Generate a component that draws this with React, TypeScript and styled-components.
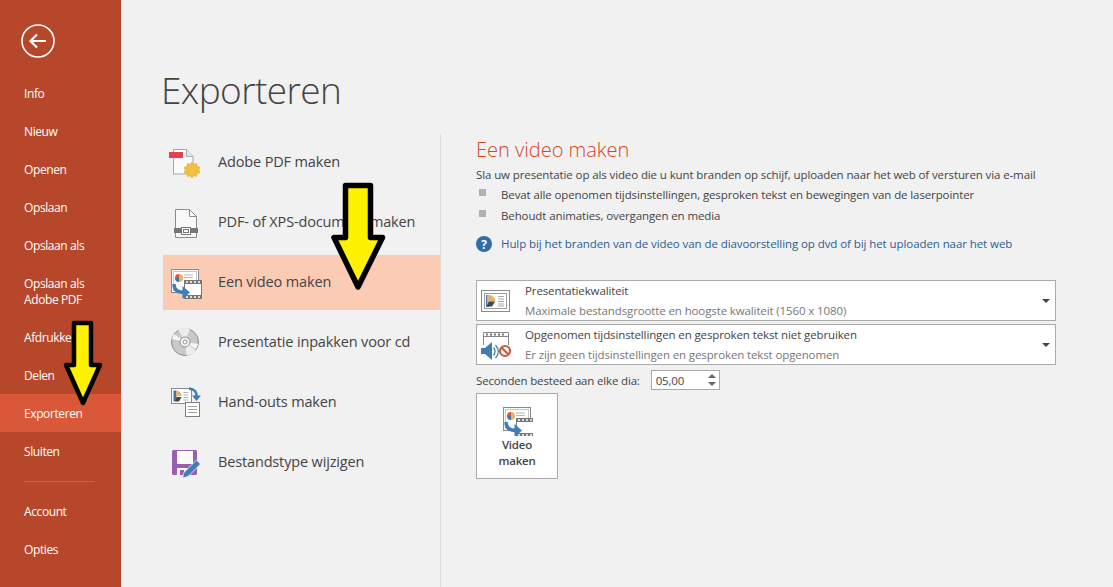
import React from "react";
import styled, { createGlobalStyle } from "styled-components";

const GlobalStyle = createGlobalStyle`
    html, body {
        margin: 0;
        padding: 0;
        height: 100%;
        overflow: hidden;
    }
    body {
        font-family: "Open Sans", "Noto Sans", "Liberation Sans", sans-serif;
        background: #f1f1f1;
    }
`;

const Page = styled.div`
    position: relative;
    display: flex;
    width: 1113px;
    height: 587px;
    overflow: hidden;
    background: #f1f1f1;
`;

/* sidebar */
const Sidebar = styled.nav`
    flex: 0 0 121px;
    display: flex;
    flex-direction: column;
    padding-top: 24px;
    background: #b7472a;
    box-sizing: border-box;
`;
const BackButton = styled.div`
    display: flex;
    margin: 0 0 16px 21px;
    height: 34px;
`;
const NavItem = styled.div<{ $active?: boolean; $tall?: boolean }>`
    display: flex;
    align-items: center;
    box-sizing: border-box;
    height: ${({ $tall }) => ($tall ? "54px" : "38px")};
    padding: 2px 0 0 24px;
    font-size: 12px;
    line-height: 16px;
    letter-spacing: -0.4px;
    color: #fff;
    background: ${({ $active }) => ($active ? "#d9583a" : "transparent")};
`;
const NavSeparator = styled.div`
    width: 71px;
    height: 1px;
    margin: 11px 0 10px 24px;
    background: #cf6147;
`;

/* main */
const Main = styled.main`
    flex: 1;
    display: flex;
    flex-direction: column;
    min-width: 0;
`;
const Title = styled.h1`
    margin: 0;
    padding: 65px 0 0 40px;
    height: 69px;
    font-size: 37px;
    line-height: 50px;
    font-weight: 300;
    letter-spacing: -0.6px;
    color: #444;
`;
const Columns = styled.div`
    flex: 1;
    display: flex;
    min-height: 0;
`;
const ExportList = styled.div`
    flex: 0 0 320px;
    box-sizing: border-box;
    display: flex;
    flex-direction: column;
    gap: 5px;
    padding: 1px 0 0 42px;
    border-right: 1px solid #dcdcdc;
`;
const ExportRow = styled.div<{ $selected?: boolean }>`
    display: flex;
    align-items: center;
    gap: 17px;
    box-sizing: border-box;
    height: 55px;
    padding: 0 0 2px 6px;
    font-size: 14.5px;
    letter-spacing: -0.15px;
    color: #444;
    background: ${({ $selected }) => ($selected ? "#fccbb4" : "transparent")};
`;
const IconSlot = styled.span`
    display: flex;
    flex: 0 0 32px;
    width: 32px;
    height: 32px;
    svg {
        overflow: visible;
    }
`;

/* detail panel */
const Detail = styled.section`
    flex: 1;
    display: flex;
    flex-direction: column;
    padding: 2px 0 0 35px;
`;
const DetailHeading = styled.h2`
    margin: 0;
    font-size: 20px;
    line-height: 28px;
    font-weight: 300;
    letter-spacing: 0;
    color: #d24726;
`;
const BodyText = styled.p`
    margin: 2px 0 0;
    font-size: 11.5px;
    line-height: 18px;
    letter-spacing: -0.11px;
    color: #444;
`;
const Bullet = styled.div`
    display: flex;
    align-items: center;
    gap: 15px;
    height: 21px;
    padding-left: 3px;
    font-size: 11.5px;
    letter-spacing: -0.11px;
    color: #444;
    &::before {
        content: "";
        width: 7px;
        height: 7px;
        margin-bottom: 4px;
        background: #b1b1b1;
    }
`;
const HelpLink = styled.div`
    display: flex;
    align-items: center;
    gap: 9px;
    margin-top: 9px;
    font-size: 11.5px;
    line-height: 18px;
    letter-spacing: -0.08px;
    color: #2b5f91;
`;
const SelectBox = styled.div<{ $first?: boolean }>`
    display: flex;
    align-items: center;
    box-sizing: border-box;
    width: 580px;
    height: 41px;
    margin-top: ${({ $first }) => ($first ? "27px" : "3px")};
    padding: 0 5px 0 4px;
    background: #fff;
    border: 1px solid #ababab;
`;
const SelectIcon = styled.span`
    display: flex;
    flex: 0 0 32px;
    width: 32px;
    height: 32px;
    svg {
        overflow: visible;
    }
`;
const SelectText = styled.div`
    flex: 1;
    margin-left: 12px;
    font-size: 11.5px;
    line-height: 20px;
    letter-spacing: -0.12px;
    color: #444;
`;
const SelectHint = styled.div`
    color: #777;
`;
const Caret = styled.span`
    width: 0;
    height: 0;
    border-left: 4px solid transparent;
    border-right: 4px solid transparent;
    border-top: 4px solid #444;
`;
const SecondsRow = styled.div`
    display: flex;
    align-items: center;
    margin-top: 5px;
    height: 20px;
    font-size: 11.5px;
    letter-spacing: -0.17px;
    color: #444;
`;
const Spinner = styled.div`
    display: flex;
    align-items: center;
    justify-content: space-between;
    box-sizing: border-box;
    width: 69px;
    height: 20px;
    margin-left: 11px;
    padding: 0 3px 0 4px;
    background: #fff;
    border: 1px solid #ababab;
`;
const SpinArrows = styled.span`
    display: flex;
    flex-direction: column;
    gap: 4px;
`;
const SpinUp = styled.span`
    width: 0;
    height: 0;
    border-left: 4px solid transparent;
    border-right: 4px solid transparent;
    border-bottom: 4px solid #666;
`;
const SpinDown = styled.span`
    width: 0;
    height: 0;
    border-left: 4px solid transparent;
    border-right: 4px solid transparent;
    border-top: 4px solid #666;
`;
const MakeButton = styled.div`
    display: flex;
    flex-direction: column;
    align-items: center;
    box-sizing: border-box;
    width: 82px;
    height: 86px;
    margin-top: 3px;
    padding-top: 10px;
    background: #fff;
    border: 1px solid #ababab;
    font-size: 11.5px;
    line-height: 16px;
    font-weight: 600;
    letter-spacing: -0.2px;
    text-align: center;
    color: #444;
`;
const MakeIcon = styled.span`
    display: flex;
    width: 32px;
    height: 32px;
    margin-bottom: 1px;
`;

/* annotation arrows lying over the screenshot */
const ArrowMark = styled.svg<{ $left: number; $top: number }>`
    position: absolute;
    left: ${({ $left }) => $left}px;
    top: ${({ $top }) => $top}px;
    overflow: visible;
`;

const BackIcon = () => (
    <svg width="34" height="34" viewBox="0 0 34 34">
        <circle cx="17" cy="17" r="16" fill="none" stroke="#fff" strokeWidth="1.6" />
        <path d="M9.5 17H25M16 10.5L9.5 17l6.5 6.5" fill="none" stroke="#fff" strokeWidth="2.2" />
    </svg>
);

const PdfIcon = () => (
    <svg width="32" height="32" viewBox="0 0 32 32">
        <path d="M4.5 3.500h13l6.500 7v17.500H4.500z" fill="#fafafa" stroke="#a8a8a8" />
        <path d="M17.500 3.500v7h6.500" fill="#e8e8e8" stroke="#a8a8a8" />
        <rect x="0" y="6" width="14" height="6" fill="#e8404f" />
        <path d="M23 16l1.800 2.300 2.800-.8.500 2.900 2.900.9-1.300 2.700 1.300 2.700-2.900.9-.5 2.900-2.800-.8L23 32l-1.800-2.300-2.800.8-.5-2.900-2.900-.9 1.300-2.700-1.300-2.700 2.900-.9.500-2.900 2.800.8z" fill="#f0c040" stroke="#dfa93a" strokeWidth="0.6" />
    </svg>
);

const XpsIcon = () => (
    <svg width="32" height="32" viewBox="0 0 32 32">
        <path d="M6.500 3.500h14l7 7v21h-21z" fill="#f9f9f9" stroke="#8c8c8c" />
        <path d="M20.500 3.500v7h7" fill="none" stroke="#8c8c8c" />
        <rect x="5" y="22" width="7" height="5" fill="#777" />
        <rect x="22" y="22" width="7" height="5" fill="#777" />
        <rect x="12.500" y="21.500" width="9" height="7" fill="#fff" stroke="#777" />
        <rect x="14.500" y="23.500" width="5" height="3" fill="none" stroke="#777" />
    </svg>
);

const VideoIcon = () => (
    <svg width="32" height="32" viewBox="0 0 32 32">
        <rect x="2.500" y="3.500" width="27" height="23" fill="#fdfdfd" stroke="#8a8a8a" />
        <rect x="4.500" y="5.500" width="23" height="19" fill="#fff" stroke="#c8c8c8" />
        <path d="M6 12a4 4 0 0 1 4-4v4z" fill="#d65532" />
        <path d="M10 8a4 4 0 0 1 0 8z" fill="#e2b36b" />
        <path d="M6 12h4v4a4 4 0 0 1-4-4z" fill="#3f74ab" />
        <path d="M15 9h9M15 11.500h9" stroke="#b9b9b9" />
        <rect x="15.500" y="14.500" width="17" height="18" fill="#fff" stroke="#777" />
        <rect x="15" y="14" width="18" height="4" fill="#777" />
        <rect x="15" y="29" width="18" height="4" fill="#777" />
        <path d="M17 16h2M21 16h2M25 16h2M29 16h2M17 31h2M21 31h2M25 31h2M29 31h2" stroke="#fff" strokeWidth="1.400" />
        <path d="M5 18c0 6 3.500 8.500 10 8.500" fill="none" stroke="#3f7cb8" strokeWidth="3.400" />
        <path d="M13.500 20l7.500 6.500-7.500 6.500z" fill="#3f7cb8" />
    </svg>
);

const DiscIcon = () => (
    <svg width="32" height="32" viewBox="0 0 32 32">
        <circle cx="16" cy="16" r="13.500" fill="#c9c9c9" stroke="#8f8f8f" />
        <path d="M16 16L9 3.500A14 14 0 0 1 21 3zM16 16L27 24.500A14 14 0 0 1 17.500 29.500z" fill="#ececec" />
        <path d="M16 16L3 13A14 14 0 0 1 5 8zM16 16L29 18A14 14 0 0 1 27 23z" fill="#f6f6f6" />
        <circle cx="16" cy="16" r="5" fill="#f4f4f4" stroke="#8f8f8f" />
        <circle cx="16" cy="16" r="2" fill="#fff" stroke="#8f8f8f" />
    </svg>
);

const HandoutIcon = () => (
    <svg width="32" height="32" viewBox="0 0 32 32">
        <rect x="2.500" y="2.500" width="20" height="15" fill="#fff" stroke="#8a8a8a" />
        <path d="M4.500 4.500h3v11h-3z" fill="#3f74ab" />
        <path d="M7 4.500a5.500 5.500 0 0 1 5.500 5.500H8l-1 3z" fill="#e0b36c" />
        <path d="M7.500 11h5l-2.500 4.500H6.500z" fill="#444" />
        <path d="M14.500 6.500h5M14.500 9h5M14.500 11.500h5M14.500 14h5" stroke="#b0b0b0" />
        <path d="M20 2.500c5.500.5 8 3.500 7.500 8" fill="none" stroke="#3f7cb8" strokeWidth="2.600" />
        <path d="M23 9.500h9L27.500 15z" fill="#3f7cb8" />
        <rect x="16.500" y="16.500" width="14" height="14" fill="#fff" stroke="#7e7e7e" />
        <path d="M19 20.500h9M19 23.500h9M19 26.500h9" stroke="#a0a0a0" />
    </svg>
);

const SaveAsIcon = () => (
    <svg width="32" height="32" viewBox="0 0 32 32">
        <path d="M3 5.500C3 4.700 3.700 4 4.500 4h22c.8 0 1.500.7 1.500 1.500V27.500c0 .8-.7 1.500-1.500 1.500h-22C3.700 29 3 28.300 3 27.500z" fill="#9a5fb0" />
        <rect x="8" y="5" width="16" height="13" fill="#fbfbfb" />
        <rect x="8" y="22" width="13" height="7" fill="#fbfbfb" />
        <rect x="11" y="24" width="4" height="5" fill="#9a5fb0" />
        <path d="M13.500 32l1.500-5.500L27.500 14l4 4L19 30.500z" fill="#3f7cb8" stroke="#f1f1f1" strokeWidth="0.800" />
    </svg>
);

const QualityIcon = () => (
    <svg width="32" height="32" viewBox="0 0 32 32">
        <rect x="0.500" y="5.500" width="28" height="21" fill="#fff" stroke="#8a8a8a" />
        <rect x="3.500" y="8.500" width="22" height="15" fill="#fff" stroke="#9c9c9c" />
        <path d="M5 10h3v12H5z" fill="#3f74ab" />
        <path d="M6 10h2a6.500 6.500 0 0 1 6.500 6.500H8l-2 3z" fill="#e0b36c" />
        <path d="M8 16.500h6l-3 5H6.500z" fill="#444" />
        <path d="M17 11.500h6M17 14h6M17 16.500h6M17 19h6M17 21h6" stroke="#aaa" />
    </svg>
);

const NarrationIcon = () => (
    <svg width="32" height="32" viewBox="0 0 32 32">
        <path d="M2.500 16V3.500h25V16" fill="#fff" stroke="#888" />
        <path d="M2.500 7.500h25" stroke="#888" />
        <path d="M5 5.500h2M9 5.500h2M13 5.500h2M17 5.500h2M21 5.500h2" stroke="#777" strokeWidth="2" />
        <path d="M0 19h4l7-6v18l-7-6H0z" fill="#3f7cb8" />
        <path d="M12.500 18.500c2 2.500 2 5.500 0 8M14.500 16c3.500 4 3.500 9 0 13" fill="none" stroke="#3f7cb8" strokeWidth="1.300" />
        <circle cx="24" cy="22" r="5" fill="#fff" stroke="#d2563b" strokeWidth="2.200" />
        <path d="M20.500 18.500l7 7" stroke="#d2563b" strokeWidth="2.200" />
    </svg>
);

const HelpIcon = () => (
    <svg width="16" height="16" viewBox="0 0 16 16">
        <circle cx="8" cy="8" r="8" fill="#2f6ea8" />
        <text x="8" y="12.500" textAnchor="middle" fontSize="12" fontWeight="700" fontFamily="Open Sans, sans-serif" fill="#fff">?</text>
    </svg>
);

const App = () => (
    <Page>
        <GlobalStyle />
        <Sidebar>
            <BackButton>
                <BackIcon />
            </BackButton>
            <NavItem>Info</NavItem>
            <NavItem>Nieuw</NavItem>
            <NavItem>Openen</NavItem>
            <NavItem>Opslaan</NavItem>
            <NavItem>Opslaan als</NavItem>
            <NavItem $tall>Opslaan als<br />Adobe PDF</NavItem>
            <NavItem>Afdrukken</NavItem>
            <NavItem>Delen</NavItem>
            <NavItem $active>Exporteren</NavItem>
            <NavItem>Sluiten</NavItem>
            <NavSeparator />
            <NavItem>Account</NavItem>
            <NavItem>Opties</NavItem>
        </Sidebar>
        <Main>
            <Title>Exporteren</Title>
            <Columns>
                <ExportList>
                    <ExportRow><IconSlot><PdfIcon /></IconSlot>Adobe PDF maken</ExportRow>
                    <ExportRow><IconSlot><XpsIcon /></IconSlot>PDF- of XPS-document maken</ExportRow>
                    <ExportRow $selected><IconSlot><VideoIcon /></IconSlot>Een video maken</ExportRow>
                    <ExportRow><IconSlot><DiscIcon /></IconSlot>Presentatie inpakken voor cd</ExportRow>
                    <ExportRow><IconSlot><HandoutIcon /></IconSlot>Hand-outs maken</ExportRow>
                    <ExportRow><IconSlot><SaveAsIcon /></IconSlot>Bestandstype wijzigen</ExportRow>
                </ExportList>
                <Detail>
                    <DetailHeading>Een video maken</DetailHeading>
                    <BodyText>Sla uw presentatie op als video die u kunt branden op schijf, uploaden naar het web of versturen via e-mail</BodyText>
                    <Bullet>Bevat alle openomen tijdsinstellingen, gesproken tekst en bewegingen van de laserpointer</Bullet>
                    <Bullet>Behoudt animaties, overgangen en media</Bullet>
                    <HelpLink><HelpIcon />Hulp bij het branden van de video van de diavoorstelling op dvd of bij het uploaden naar het web</HelpLink>
                    <SelectBox $first>
                        <SelectIcon><QualityIcon /></SelectIcon>
                        <SelectText>
                            Presentatiekwaliteit
                            <SelectHint>Maximale bestandsgrootte en hoogste kwaliteit (1560 x 1080)</SelectHint>
                        </SelectText>
                        <Caret />
                    </SelectBox>
                    <SelectBox>
                        <SelectIcon><NarrationIcon /></SelectIcon>
                        <SelectText>
                            Opgenomen tijdsinstellingen en gesproken tekst niet gebruiken
                            <SelectHint>Er zijn geen tijdsinstellingen en gesproken tekst opgenomen</SelectHint>
                        </SelectText>
                        <Caret />
                    </SelectBox>
                    <SecondsRow>
                        Seconden besteed aan elke dia:
                        <Spinner>
                            05,00
                            <SpinArrows><SpinUp /><SpinDown /></SpinArrows>
                        </Spinner>
                    </SecondsRow>
                    <MakeButton>
                        <MakeIcon><VideoIcon /></MakeIcon>
                        Video<br />maken
                    </MakeButton>
                </Detail>
            </Columns>
        </Main>
        <ArrowMark $left={60} $top={318} width="46" height="92" viewBox="0 0 46 92">
            <path d="M14 5h17v42h9L23 85 6 47h8z" fill="#fff200" stroke="#000" strokeWidth="4.500" strokeLinejoin="round" />
        </ArrowMark>
        <ArrowMark $left={328} $top={180} width="60" height="114" viewBox="0 0 60 114">
            <path d="M17.500 5.500h25v52h12L30 107 6 57.500h11.500z" fill="#fff200" stroke="#000" strokeWidth="5.500" strokeLinejoin="round" />
        </ArrowMark>
    </Page>
);

export default App;
